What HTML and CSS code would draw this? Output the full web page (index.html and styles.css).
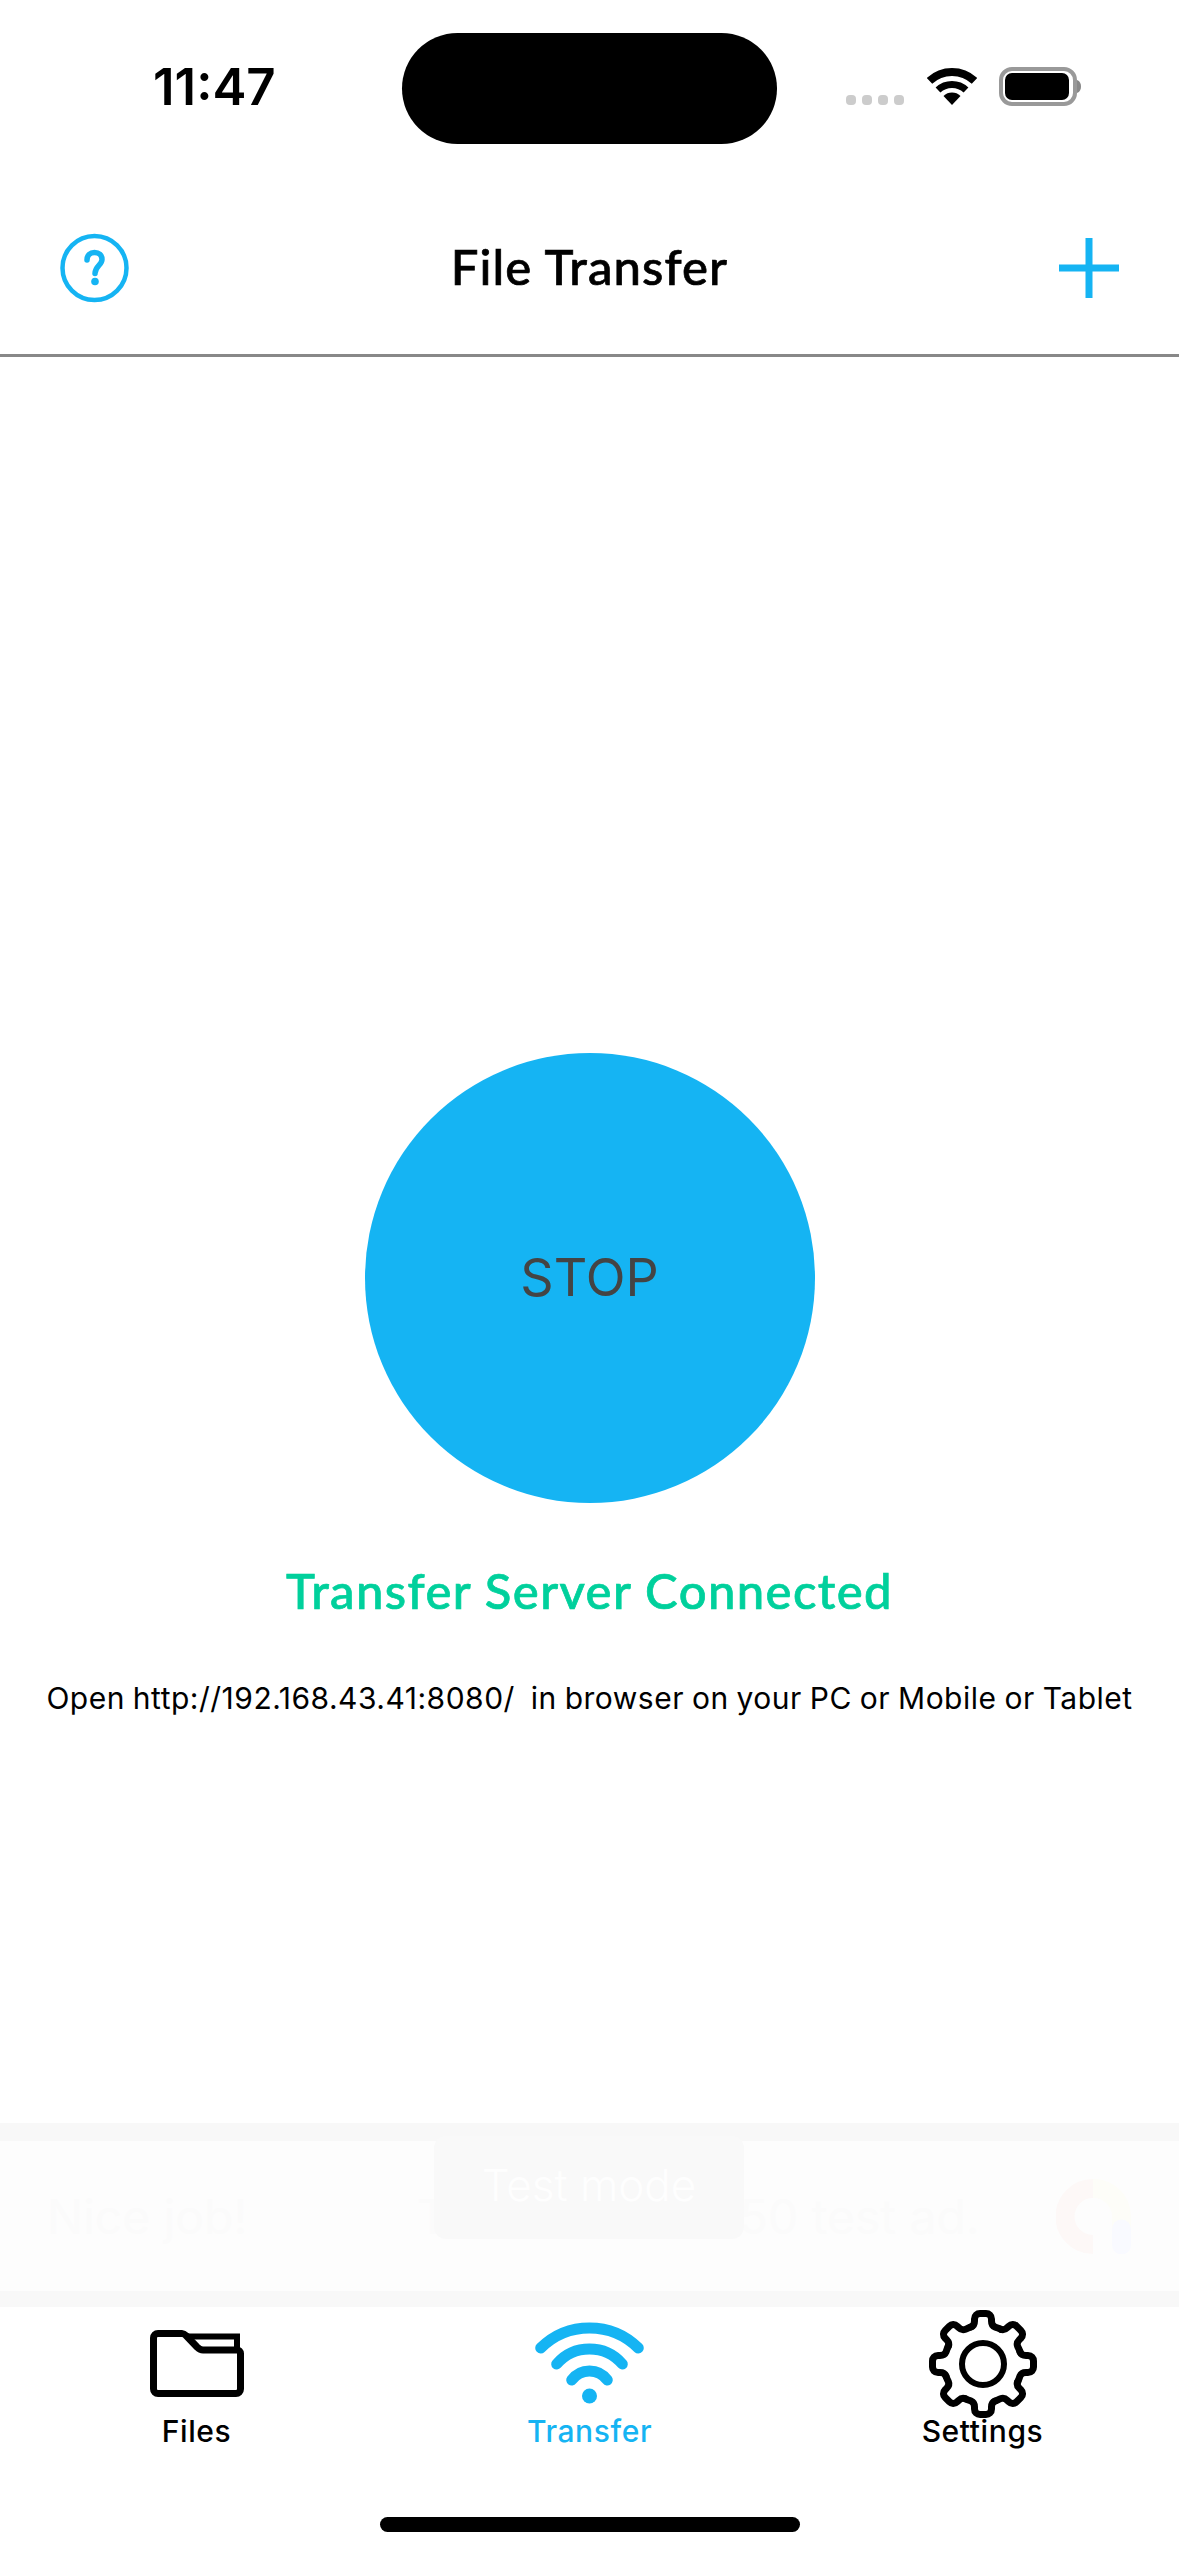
FILE: index.html
```html
<!DOCTYPE html>
<html lang="en">
<head>
    <meta charset="UTF-8">
    <meta name="viewport" content="width=device-width, initial-scale=1.0">
    <title>File Transfer</title>
    <link rel="stylesheet" href="styles.css">
</head>
<body>
    <div class="status">
        <div class="time">11:47</div>
        <div class="island"></div>
        <div class="status-right">
            <div class="dots"><span></span><span></span><span></span><span></span></div>
            <svg class="status-wifi" width="50" height="37" viewBox="0 0 50 37">
                <path d="M2.5 12.9A33 33 0 0 1 47.5 12.9" fill="none" stroke="#000" stroke-width="8"/>
                <path d="M11 22A20.5 20.5 0 0 1 39 22" fill="none" stroke="#000" stroke-width="7"/>
                <path d="M25 37L16.5 27.9A12.5 12.5 0 0 1 33.5 27.9Z" fill="#000"/>
            </svg>
            <svg class="battery" width="82" height="39" viewBox="0 0 82 39">
                <rect x="2" y="2" width="74" height="35" rx="11" fill="none" stroke="#999" stroke-width="4"/>
                <rect x="6" y="6" width="64" height="27" rx="7" fill="#000"/>
                <path d="M78 13C81 14 82 17 82 19.500C82 22 81 25 78 26Z" fill="#888"/>
            </svg>
        </div>
    </div>

    <div class="nav">
        <svg class="help" width="69" height="70" viewBox="0 0 69 70">
            <circle cx="34.500" cy="35" r="32" fill="none" stroke="#15b4f3" stroke-width="4.500"/>
            <path d="M27 27C27 22 30 19.500 34.500 19.500C39 19.500 42 22 42 26.500C42 32 35 33 35 40.500" fill="none" stroke="#15b4f3" stroke-width="5.500" stroke-linecap="round"/>
            <circle cx="35" cy="48.500" r="3.800" fill="#15b4f3"/>
        </svg>
        <h1>File Transfer</h1>
        <svg class="plus" width="60" height="60" viewBox="0 0 60 60">
            <path d="M30 0V60M0 30H60" stroke="#15b4f3" stroke-width="7"/>
        </svg>
    </div>

    <div class="main">
        <div class="stop">STOP</div>
        <div class="connected">Transfer Server Connected</div>
        <p class="hint">Open http://192.168.43.41:8080/&nbsp; in browser on your PC or Mobile or Tablet</p>
    </div>

    <div class="ad">
        <div class="ad-body">
            <span class="ad-title">Nice job!</span>
            <span class="ad-text">This is a 320x50 test ad.</span>
            <svg class="ad-logo" width="75" height="75" viewBox="0 0 75 75">
                <path d="M37 9.500A28 28 0 0 0 37 65.500" fill="none" stroke="#fdf8f7" stroke-width="19"/>
                <path d="M37 9.500A28 28 0 0 1 65.500 37V50" fill="none" stroke="#fdfdf8" stroke-width="19"/>
                <path d="M65.500 50V66" fill="none" stroke="#f9faff" stroke-width="19" stroke-linecap="round"/>
            </svg>
        </div>
        <div class="test-mode">Test mode</div>
    </div>

    <div class="tabs">
        <div class="tab">
            <svg class="icon-files" width="94" height="67" viewBox="0 0 94 67">
                <path d="M3.500 8A4.500 4.500 0 0 1 8 3.500H32C34 3.500 35 4.500 36.500 6L47 17C49 19 50 20 53 20H87A3.500 3.500 0 0 1 90.500 23.500V59A4.500 4.500 0 0 1 86 63.500H8A4.500 4.500 0 0 1 3.500 59Z" fill="none" stroke="#000" stroke-width="7" stroke-linejoin="round"/>
                <path d="M37 6.500H87V20" fill="none" stroke="#000" stroke-width="6"/>
            </svg>
            <span>Files</span>
        </div>
        <div class="tab active">
            <svg class="icon-transfer" width="110" height="82" viewBox="0 0 110 82">
                <path d="M5.700 26A69.500 69.500 0 0 1 103.300 26" fill="none" stroke="#15b4f3" stroke-width="11" stroke-linecap="round"/>
                <path d="M21.700 42A43.400 43.400 0 0 1 87.300 42" fill="none" stroke="#15b4f3" stroke-width="11" stroke-linecap="round"/>
                <path d="M36.700 58A22 22 0 0 1 72.300 58" fill="none" stroke="#15b4f3" stroke-width="11" stroke-linecap="round"/>
                <circle cx="54.500" cy="74" r="7.500" fill="#15b4f3"/>
            </svg>
            <span>Transfer</span>
        </div>
        <div class="tab">
            <svg class="icon-settings" width="108" height="108" viewBox="-54 -54 108 108">
                <defs>
                    <path id="tooth" d="M-12 -37C-9.500 -38 -8.500 -40 -8.500 -43V-45C-8.500 -48.500 -6 -50.500 -3 -50.500H3C6 -50.500 8.500 -48.500 8.500 -45V-43C8.500 -40 9.500 -38 12 -37C14.500 -36 16.500 -35.500 18 -34.700" fill="none" stroke="#000" stroke-width="7" stroke-linecap="round"/>
                </defs>
                <use href="#tooth"/>
                <use href="#tooth" transform="rotate(45)"/>
                <use href="#tooth" transform="rotate(90)"/>
                <use href="#tooth" transform="rotate(135)"/>
                <use href="#tooth" transform="rotate(180)"/>
                <use href="#tooth" transform="rotate(225)"/>
                <use href="#tooth" transform="rotate(270)"/>
                <use href="#tooth" transform="rotate(315)"/>
                <circle r="21" fill="none" stroke="#000" stroke-width="6"/>
            </svg>
            <span>Settings</span>
        </div>
    </div>
    <div class="home-bar"></div>
</body>
</html>
```

FILE: styles.css
```css
body {
    margin: 0;
    width: 1179px;
    height: 2556px;
    position: relative;
    display: flex;
    flex-direction: column;
    overflow: hidden;
    background: #fff;
    font-family: Inter, "Liberation Sans", sans-serif;
    color: #000;
}

.status {
    display: flex;
    height: 145px;
    padding: 33px 0 0 153px;
    box-sizing: border-box;
}

.time {
    width: 249px;
    margin-top: 24px;
    font-size: 51px;
    line-height: 60px;
    font-weight: 600;
}

.island {
    width: 375px;
    height: 111px;
    background: #000;
    border-radius: 56px;
}

.status-right {
    display: flex;
    align-items: flex-start;
    margin-left: 69px;
    padding-top: 34px;
}

.dots {
    display: flex;
    gap: 6px;
    margin-top: 28px;
}

.dots span {
    width: 10px;
    height: 10px;
    border-radius: 4px;
    background: #ccc;
}

.status-wifi {
    margin: 1px 0 0 23px;
}

.battery {
    margin-left: 22px;
}

.nav {
    display: grid;
    grid-template-columns: 1fr auto 1fr;
    align-items: center;
    padding: 88px 60px 51px;
    border-bottom: 3px solid #888;
}

.nav h1 {
    margin: 0 0 3px;
    font-family: Lato, sans-serif;
    font-size: 49px;
    line-height: 67px;
    font-weight: 500;
    letter-spacing: 1.1px;
    -webkit-text-stroke: 0.7px #000;
}

.plus {
    justify-self: end;
}

.main {
    flex: 1;
    display: flex;
    flex-direction: column;
    align-items: center;
    padding-top: 696px;
}

.stop {
    width: 450px;
    height: 450px;
    border-radius: 50%;
    background: #15b4f3;
    color: #444;
    display: flex;
    align-items: center;
    justify-content: center;
    font-size: 52px;
    padding-bottom: 1px;
    box-sizing: border-box;
}

.connected {
    margin-top: 58px;
    font-family: Lato, sans-serif;
    font-size: 49px;
    line-height: 58px;
    font-weight: 500;
    letter-spacing: 1.4px;
    -webkit-text-stroke: 0.7px #00d09c;
    color: #00d09c;
}

.hint {
    margin: 59px 0 0;
    font-size: 30px;
    line-height: 40px;
    letter-spacing: 0.5px;
    word-spacing: -1px;
    white-space: nowrap;
}

.ad {
    position: relative;
    height: 184px;
    padding: 18px 0 16px;
    box-sizing: border-box;
    background: #f8f8f8;
    font-family: Inter, sans-serif;
}

.ad-body {
    display: flex;
    align-items: center;
    height: 150px;
    padding: 0 48px 0 47px;
    background: #fdfdfd;
    font-size: 48px;
    color: #fbfbfb;
}

.ad-title {
    width: 370px;
}

.ad-logo {
    margin-left: auto;
}

.test-mode {
    position: absolute;
    left: 434px;
    top: 13px;
    width: 310px;
    height: 103px;
    border-radius: 12px;
    background: #f9f9f9;
    color: #fefefe;
    font-size: 44px;
    line-height: 99px;
    font-weight: 300;
    text-align: center;
}

.tabs {
    display: grid;
    grid-template-columns: repeat(3, 393px);
    height: 249px;
    padding-top: 3px;
    box-sizing: border-box;
}

.tab {
    display: flex;
    flex-direction: column;
    align-items: center;
    font-size: 30px;
    line-height: 36px;
    font-weight: 500;
    letter-spacing: 0.6px;
}

.tab.active {
    color: #15b4f3;
}

.icon-files {
    margin: 20px 0 16px;
}

.icon-transfer {
    margin: 12px 0 9px;
}

.icon-settings {
    margin-bottom: -5px;
}

.home-bar {
    position: absolute;
    left: 380px;
    top: 2517px;
    width: 420px;
    height: 15px;
    border-radius: 8px;
    background: #000;
}
```
